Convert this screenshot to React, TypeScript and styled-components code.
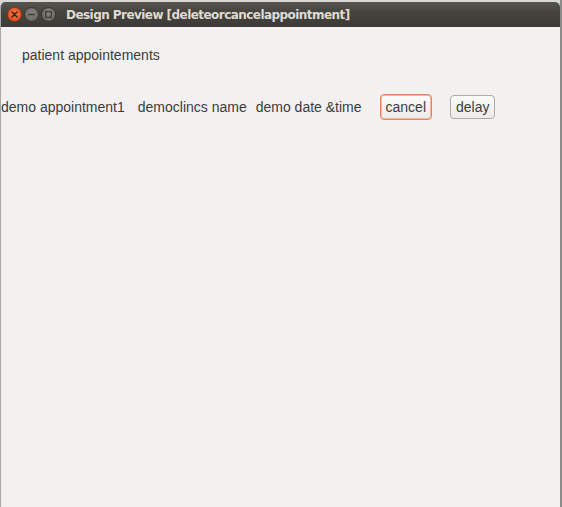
import React from "react";
import styled, { createGlobalStyle } from "styled-components";

const Global = createGlobalStyle`
  html, body { margin: 0; padding: 0; width: 562px; height: 507px; overflow: hidden; }
  body { background: #d8d8d6; font-family: "Liberation Sans", Arial, sans-serif; }
  #root { width: 562px; height: 507px; }
`;

const Screen = styled.div`
  width: 562px;
  height: 507px;
  padding-top: 2px;
  box-sizing: border-box;
  display: flex;
  background: linear-gradient(to right, #d8d8d6 0, #d8d8d6 560px, #8c8c8a 560px);
`;

const Window = styled.div`
  width: 560px;
  height: 505px;
  display: flex;
  flex-direction: column;
  background: #f2f1f0;
  border-left: 1px solid #a9a8a6;
  box-sizing: border-box;
  border-radius: 5px 5px 0 0;
  overflow: hidden;
`;

const TitleBar = styled.div`
  height: 25px;
  flex: none;
  display: flex;
  align-items: center;
  padding-left: 6px;
  background: linear-gradient(to bottom, #57554f 0%, #46443f 40%, #3c3b37 100%);
`;

const Controls = styled.div`
  display: flex;
  gap: 2px;
  margin-right: 10px;
`;

const Dot = styled.div<{ $kind: "close" | "min" | "max" }>`
  width: 15px;
  height: 15px;
  flex: none;
  border-radius: 50%;
  box-sizing: border-box;
  display: flex;
  align-items: center;
  justify-content: center;
  background: ${(p) =>
    p.$kind === "close"
      ? "radial-gradient(circle at 50% 40%, #f3774a 0%, #e45521 70%, #c84214 100%)"
      : "radial-gradient(circle at 50% 40%, #85847f 0%, #6b6a65 70%, #5a5954 100%)"};
  border: 1px solid ${(p) => (p.$kind === "close" ? "#8e3415" : "#3a3935")};
`;

const Title = styled.div`
  color: #dfdbd2;
  font-family: "DejaVu Sans", sans-serif;
  font-weight: bold;
  font-size: 12px;
  letter-spacing: -0.55px;
  white-space: nowrap;
`;

const Content = styled.div`
  flex: 1;
  display: flex;
  flex-direction: column;
  color: #3c3c3c;
  font-size: 14px;
`;

const Heading = styled.div`
  margin: 19px 0 0 21px;
  height: 18px;
  line-height: 18px;
`;

const Row = styled.div`
  margin-top: 30px;
  display: flex;
  align-items: center;
  height: 26px;
`;

const Cell = styled.span<{ $gap: number }>`
  margin-right: ${(p) => p.$gap}px;
  white-space: nowrap;
`;

const Button = styled.button<{ $focused?: boolean }>`
  font-family: inherit;
  font-size: 14px;
  color: #3c3c3c;
  height: ${(p) => (p.$focused ? 26 : 24)}px;
  padding: 0 5px;
  border-radius: 4px;
  border: 1px solid ${(p) => (p.$focused ? "#e8845c" : "#aeaba6")};
  box-shadow: ${(p) => (p.$focused ? "inset 0 0 0 1px #f3b79c" : "none")};
  background: linear-gradient(to bottom, #fbfbfa, #ecebe9);
  margin-right: ${(p) => (p.$focused ? 18 : 0)}px;
`;

function Glyph({ kind }: { kind: "close" | "min" | "max" }) {
  if (kind === "close")
    return (
      <svg width="7" height="7" viewBox="0 0 7 7">
        <path d="M1 1L6 6M6 1L1 6" stroke="#3b1a0c" strokeWidth="1.4" strokeLinecap="round" />
      </svg>
    );
  if (kind === "min")
    return (
      <svg width="7" height="7" viewBox="0 0 7 7">
        <path d="M0.5 3.5H6.5" stroke="#3a3935" strokeWidth="1.4" />
      </svg>
    );
  return (
    <svg width="7" height="7" viewBox="0 0 7 7">
      <rect x="0.7" y="0.7" width="5.6" height="5.6" fill="none" stroke="#3a3935" strokeWidth="1.2" />
    </svg>
  );
}

export default function App() {
  return (
    <>
      <Global />
      <Screen>
        <Window>
          <TitleBar>
            <Controls>
              {(["close", "min", "max"] as const).map((k) => (
                <Dot key={k} $kind={k}>
                  <Glyph kind={k} />
                </Dot>
              ))}
            </Controls>
            <Title>Design Preview [deleteorcancelappointment]</Title>
          </TitleBar>
          <Content>
            <Heading>patient appointements</Heading>
            <Row>
              <Cell $gap={13}>demo appointment1</Cell>
              <Cell $gap={9}>democlincs name</Cell>
              <Cell $gap={18}>demo date &amp;time</Cell>
              <Button $focused>cancel</Button>
              <Button>delay</Button>
            </Row>
          </Content>
        </Window>
      </Screen>
    </>
  );
}
